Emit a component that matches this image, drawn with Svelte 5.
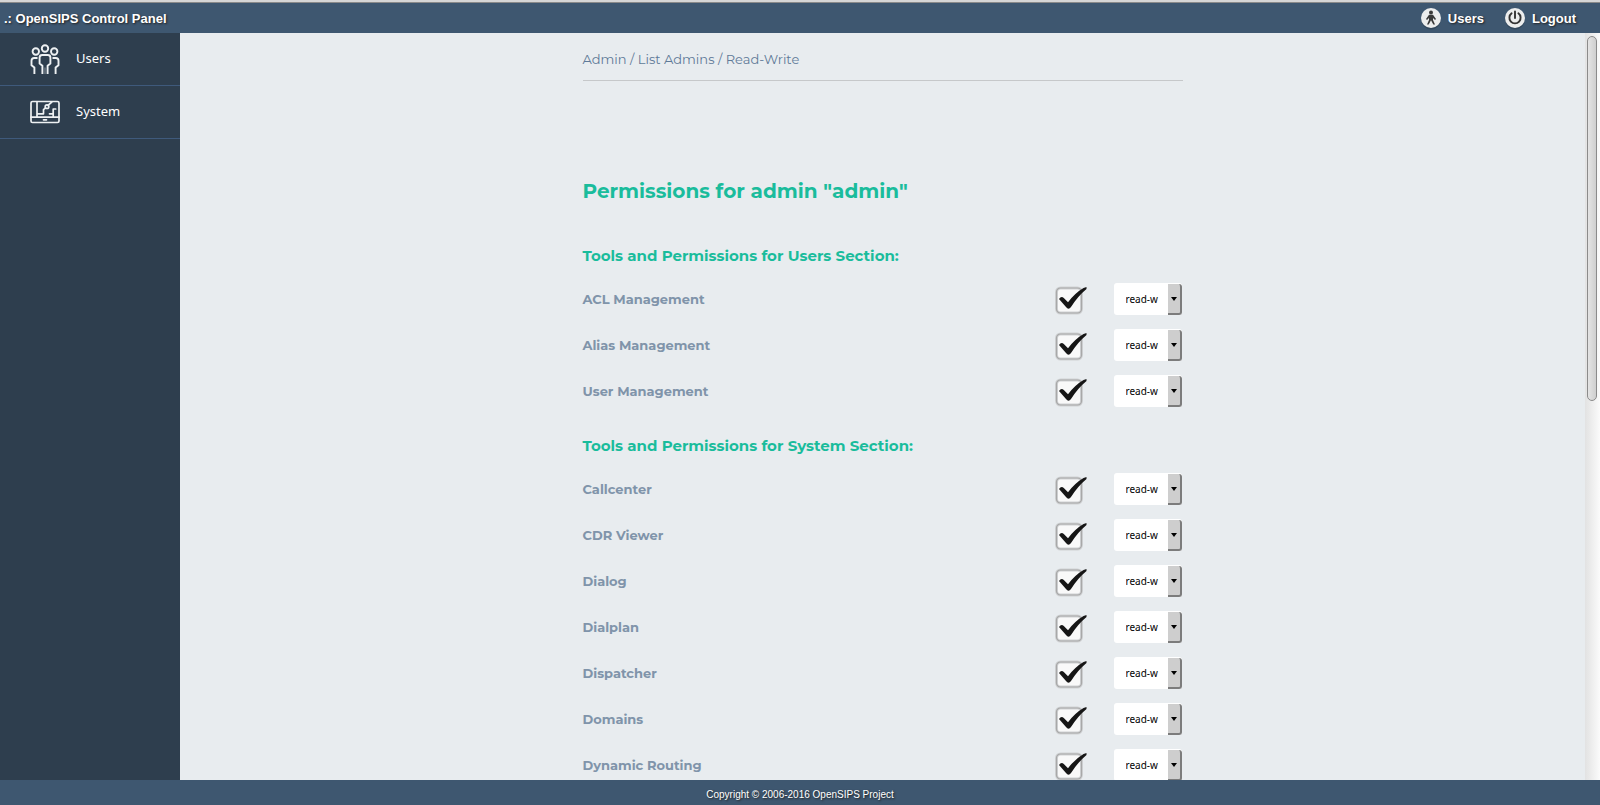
<script>
  const sections = [
    { name: 'Users', tools: ['ACL Management', 'Alias Management', 'User Management'] },
    {
      name: 'System',
      tools: ['Callcenter', 'CDR Viewer', 'Dialog', 'Dialplan', 'Dispatcher', 'Domains', 'Dynamic Routing']
    }
  ];
  const slug = (text) => text.toLowerCase().replaceAll(' ', '-');
</script>

<div class="page">
  <header class="topbar">
    <span class="brand">.: OpenSIPS Control Panel</span>
    <nav class="account">
      <a href="#users">
        <svg width="22" height="24" viewBox="0 0 22 24" aria-hidden="true">
          <circle cx="11" cy="13.500" r="10" fill="#2b3d50" opacity="0.6" />
          <circle cx="11" cy="12" r="10" fill="#eceded" />
          <circle cx="11" cy="6.500" r="2" fill="#3a3a3a" />
          <path d="M9 8.800h4l3 4.200-1 .9-2-2V14l2 4.500H13.300l-2.300-4.200L8.700 18.500H7L9 14v-2.100l-2 2-1-.9z" fill="#3a3a3a" />
        </svg>
        <span>Users</span>
      </a>
      <a href="#logout">
        <svg width="22" height="24" viewBox="0 0 22 24" aria-hidden="true">
          <circle cx="11" cy="13.500" r="10" fill="#2b3d50" opacity="0.6" />
          <circle cx="11" cy="12" r="10" fill="#eceded" />
          <path d="M7.600 7.300a5.600 5.600 0 1 0 6.800 0M11 5.500V12" fill="none" stroke="#333" stroke-width="1.900" stroke-linecap="round" />
        </svg>
        <span>Logout</span>
      </a>
    </nav>
  </header>

  <div class="body">
    <nav class="sidebar">
      <a href="#users-section">
        <svg width="30" height="32" viewBox="0 0 30 32" fill="none" stroke="#eef1f3" stroke-width="1.900" stroke-linejoin="round" aria-hidden="true">
          <circle cx="15" cy="5.500" r="3.200" />
          <circle cx="5.800" cy="8.500" r="3.200" />
          <circle cx="24.200" cy="8.500" r="3.200" />
          <path d="M12.400 31v-8.300l-2.800-2.200v-6q0-2.500 2.600-2.500h5.600q2.600 0 2.600 2.500v6l-2.800 2.200V31" />
          <path d="M15 24.500V31" stroke-width="1" opacity="0.5" />
          <path d="M7.500 15H4.200q-2.700 0-2.700 2.700v4.500l2.900 2.400V31" />
          <path d="M22.500 15h3.300q2.700 0 2.700 2.700v4.500l-2.900 2.400V31" />
        </svg>
        <span>Users</span>
      </a>
      <a href="#system-section">
        <svg width="30" height="24" viewBox="0 0 30 24" fill="none" stroke="#eef1f3" stroke-width="1.700" stroke-linecap="round" stroke-linejoin="round" aria-hidden="true">
          <rect x="1" y="1.500" width="28" height="21" rx="1.500" />
          <path d="M1 17.200h28M13.500 19.800h3M7 2v15M7 13.800h6.500v-4.200l2-1.700M18 5.400l3.800-3.400M23.200 17v-3.200H19.500M23.200 13.800V9h2.500" />
          <circle cx="17" cy="6.700" r="1.800" />
        </svg>
        <span>System</span>
      </a>
    </nav>

    <main>
      <div class="column">
        <div class="crumbs">Admin / List Admins / Read-Write</div>
        <h1>Permissions for admin "admin"</h1>
        <form>
          {#each sections as section}
            <section>
              <h2>Tools and Permissions for {section.name} Section:</h2>
              {#each section.tools as tool}
                <div class="row">
                  <label class="name" for={slug(tool)}>{tool}</label>
                  <div class="check">
                    <input type="checkbox" id={slug(tool)} checked />
                    <svg width="34" height="32" viewBox="0 0 34 32" aria-hidden="true">
                      <rect x="2.500" y="5" width="25" height="25" rx="4" fill="#f9f9f9" stroke="#d0d2d4" stroke-width="3" />
                      <rect x="2.500" y="5" width="25" height="25" rx="4" fill="none" stroke="#a8a8a8" stroke-width="1.200" />
                      <path class="tick" d="M5 16q2.200-3.200 4.800-1l4.200 4.200Q21 10 29.500 5L32.500 4V6Q24 13 17 24q-2.500 3.500-5 0Z" fill="#161616" />
                    </svg>
                  </div>
                  <div class="access">
                    <select aria-label="{tool} access">
                      <option>read-w</option>
                    </select>
                    <span class="arrow"></span>
                  </div>
                </div>
              {/each}
            </section>
          {/each}
        </form>
      </div>
    </main>
    <div class="track"><div class="thumb"></div></div>
  </div>

  <footer>Copyright © 2006-2016 OpenSIPS Project</footer>
</div>

<style>
  :global(body) {
    margin: 0;
  }
  .page {
    display: flex;
    flex-direction: column;
    height: 100vh;
    box-sizing: border-box;
    border-top: 2px solid #d6d6d6;
    font-family: Montserrat, Inter, 'Open Sans', sans-serif;
    background: #e8ecef;
  }
  a {
    color: inherit;
    text-decoration: none;
  }
  svg {
    display: block;
    flex: none;
  }
  .topbar {
    flex: none;
    display: flex;
    align-items: center;
    justify-content: space-between;
    height: 30px;
    padding: 0 24px 0 4px;
    border-top: 1px solid #8a8a8a;
    background: #3e5770;
    color: #fff;
    font: bold 13px/16px 'Liberation Sans', Arial, sans-serif;
    text-shadow: 1px 1px 2px #222;
  }
  .topbar span {
    padding-top: 2px;
  }
  .account {
    display: flex;
    gap: 20px;
  }
  .account a {
    display: flex;
    align-items: center;
    gap: 6px;
  }
  .body {
    flex: 1;
    min-height: 0;
    display: flex;
  }
  .sidebar {
    flex: none;
    width: 180px;
    background: #2e3e4e;
    color: #fff;
    font: 13px/18px 'Noto Sans', sans-serif;
  }
  .sidebar a {
    display: flex;
    align-items: center;
    gap: 16px;
    height: 52px;
    padding-left: 30px;
    border-bottom: 1px solid #3f5a7c;
  }
  .sidebar span {
    padding-bottom: 2px;
  }
  main {
    flex: 1;
    min-width: 0;
    overflow-y: auto;
    scrollbar-width: none;
  }
  .column {
    max-width: 600px;
    margin: 0 auto;
  }
  .crumbs {
    padding: 17px 0 12px;
    border-bottom: 1px solid #c6c8ca;
    color: #5f7a98;
    font-size: 13px;
    line-height: 18px;
  }
  h1 {
    margin: 96px 0 31px;
    color: #1abc9c;
    font-size: 20px;
    line-height: 28px;
    font-weight: 700;
  }
  h2 {
    margin: 0;
    color: #1abc9c;
    font-size: 15px;
    line-height: 40px;
    font-weight: 700;
  }
  section + section {
    margin-top: 12px;
  }
  .row {
    display: flex;
    align-items: center;
    height: 46px;
    padding-right: 1px;
  }
  .name {
    flex: 1;
    color: #8094aa;
    font-size: 13px;
    line-height: 18px;
    font-weight: 700;
  }
  .check {
    position: relative;
    margin-right: 26px;
  }
  .check input {
    position: absolute;
    inset: 0;
    width: 100%;
    height: 100%;
    margin: 0;
    opacity: 0;
    cursor: pointer;
  }
  .tick {
    visibility: hidden;
  }
  input:checked + svg .tick {
    visibility: visible;
  }
  .access {
    position: relative;
    width: 68px;
    height: 32px;
  }
  select {
    appearance: none;
    width: 100%;
    height: 100%;
    padding: 0 16px 0 12px;
    border: 0;
    border-radius: 3px;
    background: #fff;
    color: #000;
    font: 10px/16px 'Noto Sans', sans-serif;
  }
  .arrow {
    position: absolute;
    inset: 1px 0 0 auto;
    width: 14px;
    display: flex;
    align-items: center;
    justify-content: center;
    box-sizing: border-box;
    border-right: 2px solid #7c7c7c;
    border-bottom: 2px solid #7c7c7c;
    border-radius: 0 3px 3px 0;
    background: #cecece;
    pointer-events: none;
  }
  .arrow::before {
    content: '';
    border: 3px solid transparent;
    border-top: 4px solid #000;
    border-bottom: 0;
  }
  .track {
    flex: none;
    width: 15px;
    box-sizing: border-box;
    padding: 3px 3px 0 2px;
    background: linear-gradient(90deg, #e2e2e2, #fbfbfb);
  }
  .thumb {
    height: 49%;
    box-sizing: border-box;
    border: 1px solid #8b8b8b;
    border-radius: 5px;
    background: linear-gradient(90deg, #e4e4e4, #cfcfcf);
  }
  footer {
    flex: none;
    height: 25px;
    background: #3e5770;
    color: #fff;
    font: 10px/30px 'Liberation Sans', Arial, sans-serif;
    text-align: center;
    text-shadow: 1px 1px 2px #222;
  }
</style>
